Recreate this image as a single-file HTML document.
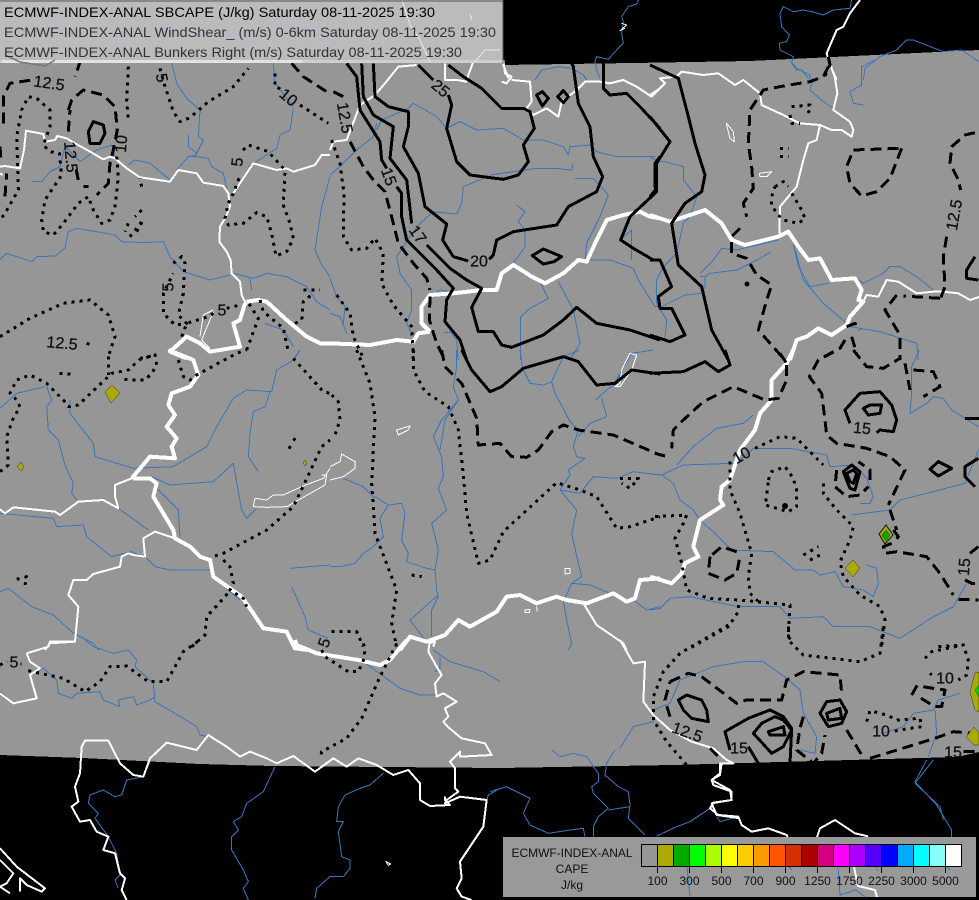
<!DOCTYPE html>
<html><head><meta charset="utf-8"><title>ECMWF-INDEX-ANAL SBCAPE</title>
<style>
html,body{margin:0;padding:0;background:#000;width:979px;height:900px;overflow:hidden}
svg{display:block}
path{fill:none;vector-effect:non-scaling-stroke;stroke-linejoin:round;shape-rendering:crispEdges}
.r path{stroke:#3b75b8;stroke-width:1}
.t path{stroke:#fff;stroke-width:2}
.l path{stroke:#fff;stroke-width:1}
.w path{stroke:#fff;stroke-width:4}
.k path{stroke:#000;stroke-width:3}
.d path{stroke:#000;stroke-width:3;stroke-dasharray:11 6}
.o path{stroke:#000;stroke-width:3;stroke-dasharray:3 5}
.lb text{font:16px "Liberation Sans",sans-serif;fill:#111;stroke:#111;stroke-width:.3;text-anchor:middle;dominant-baseline:central}
.tt{font:14px "Liberation Sans",sans-serif}
.lg{font:12px "Liberation Sans",sans-serif;fill:#111;text-anchor:middle}
</style></head><body>
<svg width="979" height="900" viewBox="0 0 979 900" xmlns="http://www.w3.org/2000/svg" font-family="Liberation Sans, sans-serif">
<rect width="979" height="900" fill="#000"/>
<path style="fill:#969696" d="M0,0 L503,0 L503,65 L633,63 L750,61 L833,57 L979,50 L979,752 L957,757 L673,765 L500,768 L273,766 L200,764 L83,758 L0,755 Z"/>

<!-- rivers -->
<g class="r">
<g transform="translate(0,60) scale(.33333)"><path d="M515,10 L530,70 L560,115 L600,150 L595,230 L610,240 L590,280 L565,260 L565,225 M590,280 L590,285 L565,290 L530,330 M570,288 L625,295 L635,320 L670,340 L685,410 M385,315 L405,300 L450,310 L510,360 M95,365 L125,365 L150,335 L180,320 L195,260 L240,305 L290,270 L335,255 L345,290 M0,598 L20,580 L50,590 L95,605 L110,590 L165,588 L195,565 L205,515 L230,505 L290,515 L345,525 L365,545 L430,548 L490,545 L510,590 L550,635 L630,660 L690,645 M700,640 L760,655 L800,640 L860,650 L920,680 L950,725 L990,750 M750,655 L755,690 M990,350 L965,440 L945,570 L965,615 L990,650 M880,145 L870,210 L840,225 L830,265 L770,305 L745,320 M820,10 L825,70 L880,140 M795,790 L850,810 L880,860"/></g>
<g transform="translate(330,60) scale(.33333)"><path d="M140,210 L155,180 L190,165 L235,145 L250,130 L320,170 L350,205 L390,185 L440,210 L520,205 L580,240 L640,240 L700,260 L715,285 L720,260 L780,255 L800,275 L860,290 L975,290 M0,345 L30,320 L80,270 L130,230 L140,190 M460,355 L400,380 L395,430 L380,462 L310,455 L270,490 L240,530 L200,590 L210,640 L245,690 L245,750 L230,790 L250,830 M480,345 L620,325 L675,325 L725,330 L730,310 M735,355 L790,355 L835,405 L810,470 L770,550 L765,600 M560,435 L585,455 L565,485 L585,510 L585,560 L550,610 M630,665 L655,715 L600,745 L572,770 L572,900 M685,665 L730,750 L750,850 L720,900 M780,600 L840,600 L910,625 L925,660 L975,740 L990,740 M870,540 L905,510 L905,600 M0,760 L30,770 L50,820 M0,655 L20,710 L45,740 L40,790 M290,710 L330,690 L360,695 M340,820 L360,815 L380,840 L385,900"/></g>
<g transform="translate(650,60) scale(.33333)"><path d="M420,0 L440,25 L480,45 L480,60 L510,55 M480,90 L520,125 L550,145 M675,0 L635,20 L635,75 L600,95 L610,130 L640,135 M480,90 L490,55 M550,150 L605,185 M0,290 L25,305 L45,305 L100,320 L100,360 L140,410 L120,470 L100,490 L80,580 L40,620 L20,660 L20,730 L50,780 L45,835 L30,840 M150,640 L190,600 L215,565 L260,570 L385,540 M150,650 L165,650 L180,640 L260,630 L320,600 L365,575 M165,650 L165,680 L155,700 L105,705 L25,745 M430,550 L445,620 L480,680 L535,670 M430,550 L460,660 L520,730 L590,790 M610,650 L640,670 L700,640 L720,620 L750,620 L800,650 L850,690 M600,800 L690,815 L800,850 L805,900"/></g>
<g transform="translate(650,350) scale(.33333)"><path d="M0,372 L35,375 L100,345 L250,340 M35,375 L70,400 L90,450 L130,480 L150,510 L200,555 L245,600 L370,605 L435,660 L490,660 L510,675 L555,665 L580,710 L640,720 L670,740 L685,700 L680,655 L650,645 M80,345 L130,290 L200,235 L280,220 L310,195 M260,340 L310,295 L420,295 L530,315 L540,350 L610,345 L650,385 L670,440 L660,460 L630,460 M605,495 L720,480 L750,450 L830,430 L945,400 L985,300 M808,0 L785,50 L785,130 L780,190 L830,160 L850,140 L880,145 L905,180 L945,205 L985,230 M0,780 L30,775 L60,745 L120,740 L265,770 L390,770 L420,805 L520,800 L550,830 L660,830 L750,865 L850,800 L910,770 L950,700"/></g>
<g transform="translate(620,620) scale(.33333)"><path d="M0,385 L40,320 L100,305 L100,270 L150,250 L180,180 L280,140 L370,125 L430,125 L500,175 L540,210 L550,280 L590,350 L585,400 L540,390 M940,420 L885,490 L960,560 L970,600 M790,340 L850,320 L880,280 L940,270 L955,240 L1020,220 M945,270 L950,340 L925,410"/></g>
<g transform="translate(0,350) scale(.33333)"><path d="M140,110 L155,150 L140,170 L145,240 L175,270 L195,345 L220,400 L215,430 L230,450 M0,175 L50,130 L135,110 M210,150 L210,190 L280,280 L285,320 L400,355 L520,350 L570,320 L620,290 L650,230 L700,145 L740,120 L815,125 L830,60 L880,30 L900,0 M810,125 L795,170 L760,185 L750,250 L745,320 L775,365 M455,380 L510,405 L640,395 L700,340 L725,480 L740,505 L770,475 M355,475 L445,540 M470,415 L535,480 L540,560 M0,490 L160,505 L170,530 L250,525 L260,560 L335,620 L395,605 L440,625 L465,650 L510,660 L630,660 M640,680 L720,750 M0,725 L25,715 L95,770 L160,795 L220,850 L280,880 L295,900 M870,655 L990,645 M875,710 L915,800 L925,840 L985,865"/></g>
<g transform="translate(0,640) scale(.33333)"><path d="M255,0 L280,20 L340,40 L385,30 L410,60 L405,80 L460,130 L465,185 L550,235 L590,260 L600,285 L625,290 M90,105 L130,85 L170,120 L175,160 L215,175 L230,160 L300,155 L310,180 L360,200 L355,180 L400,170 L410,195 L450,180 L465,170 M0,155 L40,190 L80,180 M1090,65 L1200,145 L1260,165 L1310,165 M1300,30 L1350,65 L1450,95 L1500,125 M1320,50 L1320,85 L1305,95 M825,380 L790,455 L740,490 L725,530 L700,545 L715,570 L695,590 L695,630 L730,690 L745,725 L730,745 L745,780 M1150,400 L1110,435 L1080,445 L1035,465 L1015,500 L1010,545 L1030,545 L1015,575 L1025,650 L1050,660 L1050,685 L1030,710 L990,710 L950,745 L945,775 M450,365 L430,410 L380,420 L365,465 L345,470 L310,450 L270,465 L265,490 L295,520 L285,535 L325,590 L350,640 L360,705 L345,720 L355,745 M1460,480 L1465,465 L1500,445"/></g>
<g transform="translate(330,350) scale(.33333)"><path d="M380,0 L380,50 L370,110 L385,150 L335,210 L310,260 L335,320 L340,380 L325,415 L350,480 L305,520 L325,600 L315,660 L320,720 L325,740 L305,780 L305,860 M385,150 L345,210 L330,300 M325,735 L240,810 L285,870 M135,440 L175,465 L215,460 L225,490 L215,570 L235,610 L230,635 L290,655 L315,660 M0,650 L30,650 L75,640 L100,610 L130,590 L160,560 L150,505 L175,465 M40,385 L100,410 L135,445 M570,0 L578,55 L600,100 L640,105 L665,95 L675,130 L705,185 L720,215 L745,240 L730,290 L740,320 L765,325 L715,360 L720,375 L690,420 L740,480 L725,550 L745,640 L755,680 L725,700 L700,755 L710,810 L725,880 L715,900 M750,0 L700,20 L665,95 M797,150 L830,120 L860,100 L880,50 M850,105 L905,10 L970,0 M815,145 L830,200 L780,220 L745,260 M690,420 L750,430 L790,380 L860,385 L910,365 L990,375 M725,700 L780,705 L840,730 M910,750 L950,780 L990,770"/></g>
<g transform="translate(500,0) scale(.33333)"><path d="M415,0 L410,12 L385,20 L365,50 L370,65 L365,100 L370,130 L350,150 L325,178 L290,170 L285,185 L290,210 L300,235 M1055,0 L1050,25 L1000,30 L970,45 L935,35 L910,30 L880,35 L850,20 L840,40 L845,80 L868,105 L860,125 L838,130 L840,150 L880,170 L875,190 L890,210 L905,210 L925,235 M1090,240 L1095,205 L1140,170 L1190,150 L1220,120 L1240,120 L1330,155 L1385,150 L1437,185 M105,240 L125,210 L175,200 L215,205 L250,225 L260,240"/></g>
<g transform="translate(490,750) scale(.33333)"><path d="M185,0 L210,20 L250,10 L290,20 L310,50 L325,70 L325,95 L305,110 L310,130 L355,175 L325,200 L310,230 L310,260 M375,0 L350,40 L345,75 L385,110 L415,125 L420,165 L415,205 L445,235 L465,255 M355,180 L420,170 M0,125 L50,110 L120,145 L100,190 L120,225 L175,250 L240,240 L280,235 L285,260 M500,258 L560,230 L600,215 L660,175 M680,200 L690,215 L745,200 M1310,30 L1275,95 L1340,165 L1385,240 L1385,280"/></g>
</g>

<!-- thin lakes -->
<g class="l">
<g transform="translate(650,60) scale(.33333)"><path d="M230,190 L250,215 L253,245 L240,235 L230,195Z M328,340 L365,335 L350,350 L330,350Z"/></g>
<g transform="translate(0,350) scale(.33333)"><path d="M765,445 L800,450 L820,435 L850,435 L905,410 L970,385 L990,355 M765,445 L760,470 L800,472 L860,470 L975,405 L980,375 L965,375"/></g>
<g transform="translate(330,350) scale(.33333)"><path d="M200,240 L240,228 L235,240 L205,255Z M705,655 L720,655 L720,670 L705,672Z M585,780 L600,778 L598,788 L585,788Z M620,770 L622,785 M0,350 L30,335 L35,312 L75,335 L75,355 L40,380 L0,390 M855,110 L870,100 L875,60 L900,10 L920,15 L905,60 L870,110Z"/></g>
<g transform="translate(0,60) scale(.33333)"><path d="M640,750 L610,765 L600,830 M640,755 L605,840 L630,865"/></g>
<g transform="translate(0,640) scale(.33333)"><path d="M1158,665 L1172,672 L1165,676 L1158,665Z"/></g>
<g transform="translate(500,0) scale(.33333)"><path d="M365,70 L380,75 L360,92 L375,85"/></g>
</g>

<!-- medium white borders -->
<g class="t">
<g transform="translate(0,60) scale(.33333)"><path d="M0,320 L15,318 L60,325 L72,270 L78,212 L130,222 L135,245 L165,240 L172,228 L200,235 L225,250 L265,272 L310,298 L330,290 L345,295 L380,325 L420,352 L510,365 L535,330 L590,340 L610,368 L670,378 L685,400 L690,440 L678,470 L660,500 L658,545 L680,575 L692,600 L695,640 L720,665 L725,705 L740,735 M700,400 L760,310 L830,330 L860,325 L880,335 L945,315 L965,285 L990,285 M0,340 L8,345"/></g>
<g transform="translate(330,60) scale(.33333)"><path d="M0,270 L10,245 L50,240 L90,135 L135,105 L165,70 L205,20 L260,15 M345,10 L345,60 L380,60 L410,65 L415,45 L430,5 L465,0 M520,0 L525,40 L545,50 L530,70 L515,65 M545,60 L600,65 L605,125 L590,145 L610,165 L650,145 L685,170 L695,125 L740,90 L765,65 L810,65 L840,70 L880,60 L920,80 L965,110 L990,85"/></g>
<g transform="translate(650,60) scale(.33333)"><path d="M0,105 L30,85 L45,70 L30,55 L80,50 L95,35 L160,45 L205,40 L255,75 L280,60 L330,100 L335,135 L400,165 L450,190 L510,195 L545,210 L575,210 L605,230 L610,210 L600,185 L550,150 L562,100 L555,55 L537,0 M510,195 L500,240 L475,250 L460,300 L440,380 L390,440 L388,520 M640,725 L650,705 L685,710 L710,660 L745,665 L800,700 L850,695 L880,695 L925,700 L960,720 L990,710"/></g>
<g transform="translate(620,620) scale(.33333)"><path d="M0,60 L40,130 L75,125 L70,245 L100,285 L150,330 L215,365 L280,385 L320,420 L340,430 L300,430 L300,460 L275,480 L330,510 L335,540 L275,550 L290,585 L360,595"/></g>
<g transform="translate(0,350) scale(.33333)"><path d="M395,385 L345,405 L345,440 L355,475 L310,450 L235,455 L180,495 L165,485 L40,472 L15,490 L0,478 M525,565 L465,545 L430,565 L435,620 L400,615 L385,610 L365,620 L360,650 L280,672 L260,690 L220,690 L205,735 L235,770 L225,875 L150,880 L135,900"/></g>
<g transform="translate(0,640) scale(.33333)"><path d="M80,40 L145,20 L150,5 L225,5 M80,40 L90,65 L120,85 L90,105 L110,175 L40,190 L0,160 M1290,0 L1285,35 L1310,80 L1325,105 L1305,130 L1310,170 L1330,160 L1370,185 L1335,205 L1345,230 L1330,245 L1345,262 L1385,295 L1455,310 L1475,345 L1380,350 L1380,335 L1350,365 L1365,385 L1365,445 L1375,455 L1340,480 L1335,490 L1380,470 L1460,480 L1450,560 L1380,665 L1385,715 L1370,745 L1385,770 L1415,780 M1335,470 L1335,480 L1350,495 L1290,498 L1260,480 L1260,430 L1225,390 L1180,405 L1130,375 L1075,355 L1040,380 L1000,355 L945,395 L880,348 L830,370 L800,355 L750,335 L720,350 L680,320 L640,295 L625,285 L590,330 L500,308 L450,355 L430,410 L400,405 L360,370 L325,302 L255,302 L245,320 L240,400 L225,440 L235,485 L215,500 L240,545 L270,540 L290,575 L325,590 L310,630 L345,640 L360,700 L375,715 L365,750 L380,780 M0,625 L50,680 L135,745 L125,755 L80,735 L60,715 L60,755 M0,660 L40,700 L20,730 L0,740 L30,760"/></g>
<g transform="translate(330,350) scale(.33333)"><path d="M760,760 L800,825 L880,880 L890,900 M295,880 L315,875 L310,890"/></g>
<g transform="translate(500,0) scale(.33333)"><path d="M1080,0 L1050,40 L1030,80 L1010,90 L980,160 L990,195 L1010,240 M5,160 L10,195 L25,235"/></g>
<g transform="translate(490,750) scale(.33333)"><path d="M695,40 L690,75 L665,90 L670,105 L725,125 L725,150 L670,158 L660,175 L685,195 L745,200 L755,225 L785,245 L835,235 L890,255 L900,280 M975,280 L990,235 L1035,210 L1095,250 L1130,258 L1150,280"/></g>
</g>

<!-- thick white -->
<g class="w">
<g transform="translate(0,60) scale(.33333)"><path d="M740,725 L775,720 L800,725 L860,780 L920,830 L960,850 L990,850 M735,730 L720,780 L700,790 L720,860 L630,875 L600,850 L560,830 L510,875 L560,895"/></g>
<g transform="translate(330,60) scale(.33333)"><path d="M0,850 L120,855 L200,840 L250,845 L265,820 L300,815 M300,815 L275,790 L275,740 L300,705 L370,700 L455,690 L500,690 L515,640 L550,615 L590,640 L605,650 L645,670 L700,640 L745,600 L770,605 L800,540 L830,480 L880,465 L930,455 L960,470 L990,475"/></g>
<g transform="translate(650,60) scale(.33333)"><path d="M0,465 L60,485 L165,450 L215,490 L245,540 L285,555 L385,530 L415,515 L445,560 L475,600 L510,595 L545,660 L615,655 L635,690 L625,720 L640,725 L600,770 L590,795 L545,825 L505,805 L470,830 L440,840 L420,900"/></g>
<g transform="translate(650,350) scale(.33333)"><path d="M430,0 L410,40 L365,90 L365,150 L330,190 L315,240 L270,300 L240,390 L215,410 L210,450 L220,465 L150,510 L130,590 L145,620 L105,640 L95,670 L65,700 L0,680"/></g>
<g transform="translate(0,350) scale(.33333)"><path d="M505,0 L580,30 L595,75 L570,110 L515,130 L505,165 L525,195 L500,230 L530,265 L515,290 L525,325 L450,320 L395,385 M400,385 L450,385 L470,400 L460,440 L490,490 L520,540 L525,565 L570,590 L600,620 L630,630 L640,680 L725,740 L760,790 L790,835 L860,845 L885,895 L920,900"/></g>
<g transform="translate(0,640) scale(.33333)"><path d="M885,0 L890,15 L950,40 L1075,60 L1140,75 L1170,60 L1220,0"/></g>
<g transform="translate(330,350) scale(.33333)"><path d="M210,900 L240,860 L290,875 L345,855 L385,810 L420,830 L500,785 L530,740 L570,735 L620,760 L680,740 L710,750 L770,760 L850,730 L890,755 L915,745 L930,690 L990,685"/></g>
</g>

<!-- dotted contours -->
<g class="o">
<g transform="translate(0,60) scale(.33333)"><path d="M385,20 L380,125 L385,175 M480,25 L495,80 L520,155 L540,185 L565,175 L585,160 L625,125 L700,80 L745,25 M825,40 L825,80 L850,90 M900,135 L985,190 M350,290 L355,350 L345,440 L330,480 L305,490 L280,450 L265,410 L235,430 L190,490 L160,525 L130,515 L125,480 L135,420 L185,345 L178,280 L150,275 L130,255 L150,200 L150,150 L110,115 L85,110 L65,150 L50,230 L55,390 L15,460 L0,480 M425,380 L420,355 M425,450 L405,470 M385,490 L375,515 M410,515 L430,480 L390,530 M717,355 L700,400 L685,430 L675,475 L685,495 L730,490 L770,458 L800,470 L815,520 L828,588 L860,575 L880,535 L870,490 L850,435 L855,330 L805,275 L745,255 L725,275 M520,610 L545,590 L555,610 L550,700 L535,765 L560,790 L525,795 L490,760 L490,700 L520,640 M0,830 L90,775 L190,730 L270,720 L325,765 L345,830 L325,890 M260,850 L275,855 M545,830 L560,790 L625,770 L640,760 M680,745 L720,735 M910,690 L960,690 M740,870 L775,775 L740,720 M780,720 L790,755 L850,805 L865,875 M885,790 L905,780 L910,725 L940,700 M420,895 L470,885"/></g>
<g transform="translate(330,60) scale(.33333)"><path d="M5,240 L30,310 L42,400 L40,530 L65,570 L110,565 L135,535 L160,580 L155,670 L190,735 L245,800 L250,900 M20,705 L60,760 L70,830 L100,895"/></g>
<g transform="translate(650,60) scale(.33333)"><path d="M425,140 L480,135 L480,150 L465,170 M420,165 L425,190 L450,190 M390,265 L415,265 M390,290 L415,290 M375,380 L400,365 L415,380 M425,400 L455,450 L465,475 L445,490 L400,480 L380,460 L365,435 L365,410 L375,380"/></g>
<g transform="translate(650,350) scale(.33333)"><path d="M15,500 L110,495 L100,520 L75,565 L95,640 L100,665 L110,720 L175,745 L270,750 L420,765 L415,860 L430,880 M240,335 L240,400 L240,420 L270,490 L305,610 L295,680 L300,730 L325,755 M265,765 L265,785 L235,830 L110,900 M315,295 L390,260 L440,265 L480,305 L520,345 M520,400 L520,430 L560,480 L610,530 L600,570 L570,635 L580,680 L630,735 L690,770 L705,810 L695,890 M355,390 L365,365 L405,350 L430,385 L440,420 L440,470 L415,485 L345,465 L350,440 Z M460,615 L505,590 M480,630 L510,615 M865,890 L940,885"/></g>
<g transform="translate(620,620) scale(.33333)"><path d="M325,15 L180,100 L130,155 L100,230 L100,300 L140,365 L200,435 M505,20 L505,60 L550,105 L720,125 L780,100 L790,20 M915,115 L935,95 L1030,75 L1045,120 L1040,165 L1015,180 M930,160 L935,165 M740,305 L750,272 L800,285 L830,300 L900,295 L905,320 L840,330 L815,335"/></g>
<g transform="translate(0,350) scale(.33333)"><path d="M0,365 L25,345 L20,260 L40,205 L60,170 L50,150 L30,130 L50,90 L90,75 L140,100 L190,150 L205,170 L235,165 L335,70 L385,60 L420,28 L465,15 L470,45 L455,70 L435,90 L385,90 L360,85 M325,20 L325,75 M178,70 L215,72 M535,30 L550,80 L570,90 L590,75 L710,10 L740,0 M645,618 L670,610 L800,540 L880,470 L930,365 L965,290 L990,270 M880,25 L970,125 L990,130 M670,630 L690,650 L700,700 L690,720 L730,745 L740,770 M575,890 L615,855 L620,800 L675,740 L690,720 M865,290 L885,300 M880,265 L892,278 M50,688 L80,680 L75,705"/></g>
<g transform="translate(0,640) scale(.33333)"><path d="M0,75 L22,63 M62,72 L65,72 M85,92 L190,115 L255,155 L300,125 L330,80 L380,78 L445,125 L500,125 L550,35 L600,0 M965,30 L975,50 L1045,95 L1075,95 L1095,50 L1090,0 M1190,10 L1140,110 L1085,235 L1040,295 L965,335 L960,358"/></g>
<g transform="translate(330,350) scale(.33333)"><path d="M80,0 L120,100 L135,200 L125,400 L135,550 L200,720 L185,820 L200,890 M250,0 L250,60 L285,125 L355,170 L385,240 L400,375 L410,490 L445,640 L480,630 L520,545 L680,398 L750,420 L800,440 L860,535 L900,530 L990,500 M5,135 L25,155 L30,210 L15,255 M245,675 L275,680 M870,385 L925,385 L900,415 L875,400 M5,845 L80,845 L100,890"/></g>
</g>

<!-- dashed contours -->
<g class="d">
<g transform="translate(0,60) scale(.33333)"><path d="M205,150 L215,120 L250,90 L310,105 L345,140 L352,210 L340,270 L330,310 L325,370 L290,405 M265,380 L250,380 M235,360 L225,310 M242,0 L225,50 M10,190 L10,110 L30,70 L95,60 M15,410 L20,340 M0,260 L3,300 M875,10 L910,50 L980,95 M205,215 L210,150"/></g>
<g transform="translate(330,60) scale(.33333)"><path d="M10,95 L40,110 M60,245 L100,320 L130,360 L165,395 L190,490 L205,550 L250,610 L290,655 L300,690 M300,710 L298,780 L320,850 L340,890"/></g>
<g transform="translate(650,60) scale(.33333)"><path d="M535,20 L520,50 L480,65 L400,78 L340,90 L300,150 L295,250 L305,320 L310,385 L280,430 L290,470 M270,505 L245,530 L245,580 L290,595 L320,645 L365,675 L350,720 L325,810 L400,895 M755,265 L720,355 L680,395 L635,408 L600,370 L590,320 L610,270 L750,265 M975,218 L945,225 L905,260 L900,310 L925,360 L932,390 M890,530 L880,590 L885,680 L870,720 M870,715 L760,708 M740,705 L705,750 L750,825 L750,900 M590,800 L615,790 L630,810 M605,830 L620,880 M585,840 L570,865 L525,890"/></g>
<g transform="translate(650,350) scale(.33333)"><path d="M550,5 L505,30 L478,80 L515,130 L525,210 L530,255 L560,280 L650,295 L720,320 L765,360 L715,465 M720,480 L740,540 M725,580 L700,590 L705,610 L740,605 L830,620 L870,670 L910,735 M925,748 L985,750 M610,0 L650,50 L700,55 L750,25 M765,40 L780,120 M790,60 L850,65 L870,110 L820,140 M410,45 L410,90 L385,145 L345,150 L250,110 L160,155 L100,210 L70,240 L65,295 M45,318 L15,310 M390,10 L410,40 M180,620 L175,670 L225,690 L260,670 L270,620 M260,605 L215,590 L180,620 M560,360 L555,410 L590,440 L630,435 L655,410 M660,390 L660,360 L625,335 M960,610 L985,590 M945,690 L965,700 L985,700 M730,540 L745,560 L730,580"/></g>
<g transform="translate(620,620) scale(.33333)"><path d="M150,185 L205,160 L245,170 L350,250 L380,240 L485,240 L500,180 L550,155 L660,165 L665,220 M550,290 L540,325 L530,390 L580,430 L605,400 L615,345 M150,290 L135,240 L150,185 M680,330 L725,405 M270,385 L295,410 M750,415 L945,355 L1000,335 L1060,340 M875,225 L895,190 M910,200 L940,205 L975,210 L965,260 L945,260 L895,230 M1030,395 L1077,395"/></g>
<g transform="translate(330,350) scale(.33333)"><path d="M335,0 L345,50 L395,100 L440,205 L445,285 L510,280 L545,320 L590,322 L625,300 L665,245 L700,225 L745,240 L850,255 L990,315"/></g>
<g transform="translate(500,0) scale(.33333)"><path d="M985,170 L990,195 L975,228"/></g>
</g>

<!-- solid contours -->
<g class="k">
<g transform="translate(0,60) scale(.33333)"><path d="M265,215 L280,185 L310,195 L315,220 L300,250 L270,250 Z"/></g>
<g transform="translate(330,60) scale(.33333)"><path d="M50,10 L80,50 L90,150 L150,245 L155,300 L170,325 M200,380 L215,400 L215,470 L230,540 L270,580 L320,630 L370,685 L350,720 L345,785 L390,840 L410,900 M95,10 L100,110 L130,165 L190,200 L180,295 L230,360 L245,490 M290,555 L360,625 L410,660 L455,685 L425,742 L445,815 L490,815 L515,855 L545,862 L640,825 L700,780 L740,742 L800,790 L900,810 L990,840 M130,10 L135,110 L175,140 L235,155 L235,200 L220,260 L265,340 L285,440 L350,492 L338,540 L370,590 L415,603 M478,598 L490,585 L500,540 L550,515 L680,495 L715,440 L800,395 L818,350 L790,290 L780,200 L745,130 L730,20 L725,10 M265,15 L310,60 M355,105 L365,135 L350,205 L380,305 L420,345 L520,358 L565,345 L595,305 L580,255 L613,205 L600,155 L580,145 L515,145 L455,85 L400,50 L355,15 M820,10 L820,85 L840,105 L890,100 L930,140 L990,205 M990,290 L975,310 L975,380 L980,395 L900,470 L872,540 L910,565 L970,600 L990,600 M620,105 L637,95 L655,115 L637,138 Z M683,110 L700,92 L715,110 L700,128 Z M607,587 L640,567 L695,590 L672,605 L640,612 Z"/></g>
<g transform="translate(650,60) scale(.33333)"><path d="M0,15 L85,55 L110,150 L135,250 L165,345 L155,395 L105,430 L65,490 L85,615 L155,680 L185,810 L235,900 M0,170 L60,245 L20,310 L20,385 L0,410 M0,600 L30,600 L65,680 L25,710 L30,745 L65,745 L105,825 L60,845 L0,825 M975,590 L950,630 L950,655 L985,660"/></g>
<g transform="translate(650,350) scale(.33333)"><path d="M0,70 L100,65 L165,35 L205,65 L240,45 L225,0 M600,220 L585,180 L630,130 L690,125 L725,165 L740,210 L730,245 L690,240 L680,248 M640,175 L660,165 L695,165 L690,190 L655,195 Z M580,365 L605,345 L630,365 L615,420 L600,415 Z M590,370 L610,360 L620,370 L610,400 L600,395 Z M840,358 L865,335 L905,355 L865,378 Z M985,325 L945,350 L945,380 L975,410 M945,205 L987,205"/></g>
<g transform="translate(620,620) scale(.33333)"><path d="M175,240 L200,225 L245,240 L260,270 L265,305 L215,295 L190,270Z M330,390 L315,335 L385,295 L450,270 L490,290 L515,325 L510,430 M385,380 L415,430 M425,310 L465,290 L490,300 L515,330 L490,380 L455,400 L400,340 Z M445,335 L490,320 L495,345 L450,345 Z M600,280 L620,245 L660,240 L680,275 L665,310 L625,320 Z M620,280 L660,265 L665,295 L625,300 Z"/></g>
<g transform="translate(330,350) scale(.33333)"><path d="M395,0 L425,60 L480,125 L515,110 L580,55 L700,20 L745,35 L800,105 L855,100 L905,60 L990,72"/></g>
</g>

<!-- filled features -->
<g stroke="#333" stroke-width=".5">
<polygon fill="#aaaa00" points="105,392 112,385 120,393 111,403"/>
<polygon fill="#aaaa00" points="17,467 21,462 24,467 21,471"/>
<polygon fill="#aaaa00" points="303,463 305,460 307,463 305,466"/>
<polygon fill="#aaaa00" points="845,568 853,560 860,568 853,577"/>
<polygon fill="#aaaa00" stroke="#111" stroke-width="1" points="879,534 886,525 893,535 885,544"/>
<polygon fill="#00aa00" points="882,535 886,530 890,535 886,541"/>
<polygon fill="#aaaa00" points="970,692 975,673 979,672 979,712 975,710"/>
<polygon fill="#00dd00" points="975,690 979,685 979,697"/>
<polygon fill="#aaaa00" points="966,737 974,727 979,733 979,745 974,745"/>
</g>
<circle cx="747" cy="284" r="2.5" fill="#000"/>
<circle cx="785" cy="506" r="3" fill="#000"/>

<!-- labels -->
<g class="lb">
<text transform="translate(49,84) rotate(8)">12.5</text>
<text transform="translate(70,157) rotate(85)">12.5</text>
<text transform="translate(122,144) rotate(-85)">10</text>
<text transform="translate(161,78) rotate(80)">5</text>
<text transform="translate(288,98) rotate(40)">10</text>
<text transform="translate(238,162) rotate(-85)">5</text>
<text transform="translate(169,287) rotate(-90)">5</text>
<text transform="translate(222,311)">5</text>
<text transform="translate(62,344) rotate(5)">12.5</text>
<text transform="translate(440,89) rotate(40)">25</text>
<text transform="translate(344,118) rotate(80)">12.5</text>
<text transform="translate(388,177) rotate(70)">15</text>
<text transform="translate(417,235) rotate(55)">17</text>
<text transform="translate(479,262)">20</text>
<text transform="translate(955,215) rotate(-80)">12.5</text>
<text transform="translate(862,429) rotate(5)">15</text>
<text transform="translate(742,456) rotate(-30)">10</text>
<text transform="translate(965,567) rotate(-85)">15</text>
<text transform="translate(687,733) rotate(20)">12.5</text>
<text transform="translate(739,749)">15</text>
<text transform="translate(945,679)">10</text>
<text transform="translate(881,732)">10</text>
<text transform="translate(953,753)">15</text>
<text transform="translate(14,663)">5</text>
<text transform="translate(325,643) rotate(-70)">5</text>
</g>

<!-- title panel -->
<rect x="0" y="0" width="503" height="63" fill="#bcbcbc" fill-opacity=".97"/>
<rect x="0" y="60" width="503" height="3" fill="#cfcfcf"/>
<rect x="2" y="60" width="300" height="3" fill="#e2e2e2"/>
<path d="M28,0 L37,15 L60,22 L75,28 L100,28 L125,45 L130,60 M160,27 L175,32 L200,35 L212,30 L245,40 L260,30 L300,25 L320,30 L340,43 L340,60 M0,50 L30,55" style="stroke:#a9bfdc;stroke-width:1"/>
<path d="M402,0 L410,25 L420,40 L430,62 M470,14 L472,20 M475,62 L485,50 L500,50" style="stroke:#e8e8e8;stroke-width:1"/>
<path d="M5,55 L20,62 L45,66 L55,60" style="stroke:#777;stroke-width:1.5"/>
<path d="M0,1 H503 V64" style="stroke:#555;stroke-width:1"/>
<text class="tt" x="4" y="17" fill="#000" textLength="431" lengthAdjust="spacingAndGlyphs">ECMWF-INDEX-ANAL SBCAPE (J/kg) Saturday 08-11-2025 19:30</text>
<text class="tt" x="4" y="37" fill="#333" textLength="492" lengthAdjust="spacingAndGlyphs">ECMWF-INDEX-ANAL WindShear_ (m/s) 0-6km Saturday 08-11-2025 19:30</text>
<text class="tt" x="4" y="57" fill="#333" textLength="458" lengthAdjust="spacingAndGlyphs">ECMWF-INDEX-ANAL Bunkers Right (m/s) Saturday 08-11-2025 19:30</text>

<!-- legend -->
<rect x="503" y="837" width="473" height="60" fill="#999"/>
<path d="M687,867 L690,897 M789,867 L792,870 M838,867 L840,895 L856,890 L865,897 M930,852 L950,870 M875,865 L878,871" style="stroke:#3b75b8;stroke-width:1"/>
<path d="M854,867 L858,886 L875,890 L877,897" style="stroke:#fff;stroke-width:2"/>
<g stroke="#000" stroke-width="1" shape-rendering="crispEdges">
<rect x="641.5" y="844.5" width="16" height="22" fill="#969696"/>
<rect x="657.5" y="844.5" width="16" height="22" fill="#aaaa00"/>
<rect x="673.5" y="844.5" width="16" height="22" fill="#00aa00"/>
<rect x="689.5" y="844.5" width="16" height="22" fill="#00ff00"/>
<rect x="705.5" y="844.5" width="16" height="22" fill="#aaff00"/>
<rect x="721.5" y="844.5" width="16" height="22" fill="#ffff00"/>
<rect x="737.5" y="844.5" width="16" height="22" fill="#ffcc00"/>
<rect x="753.5" y="844.5" width="16" height="22" fill="#ff9900"/>
<rect x="769.5" y="844.5" width="16" height="22" fill="#ff5500"/>
<rect x="785.5" y="844.5" width="16" height="22" fill="#d53000"/>
<rect x="801.5" y="844.5" width="16" height="22" fill="#aa0000"/>
<rect x="817.5" y="844.5" width="16" height="22" fill="#d40080"/>
<rect x="833.5" y="844.5" width="16" height="22" fill="#ff00ff"/>
<rect x="849.5" y="844.5" width="16" height="22" fill="#aa00ff"/>
<rect x="865.5" y="844.5" width="16" height="22" fill="#5500ff"/>
<rect x="881.5" y="844.5" width="16" height="22" fill="#0000ff"/>
<rect x="897.5" y="844.5" width="16" height="22" fill="#00aaff"/>
<rect x="913.5" y="844.5" width="16" height="22" fill="#00ffff"/>
<rect x="929.5" y="844.5" width="16" height="22" fill="#88ffff"/>
<rect x="945.5" y="844.5" width="16" height="22" fill="#ffffff"/>
<path d="M657.5,866 V873 M689.5,866 V873 M721.5,866 V873 M753.5,866 V873 M785.5,866 V873 M817.5,866 V873 M849.5,866 V873 M881.5,866 V873 M913.5,866 V873 M945.5,866 V873" style="stroke:#000;stroke-width:1"/>
</g>
<text class="lg" x="572" y="857" textLength="121">ECMWF-INDEX-ANAL</text>
<text class="lg" x="572" y="873">CAPE</text>
<text class="lg" x="572" y="889">J/kg</text>
<text class="lg" x="657.5" y="885">100</text>
<text class="lg" x="689.5" y="885">300</text>
<text class="lg" x="721.5" y="885">500</text>
<text class="lg" x="753.5" y="885">700</text>
<text class="lg" x="785.5" y="885">900</text>
<text class="lg" x="817.5" y="885">1250</text>
<text class="lg" x="849.5" y="885">1750</text>
<text class="lg" x="881.5" y="885">2250</text>
<text class="lg" x="913.5" y="885">3000</text>
<text class="lg" x="945.5" y="885">5000</text>
</svg>
</body></html>
